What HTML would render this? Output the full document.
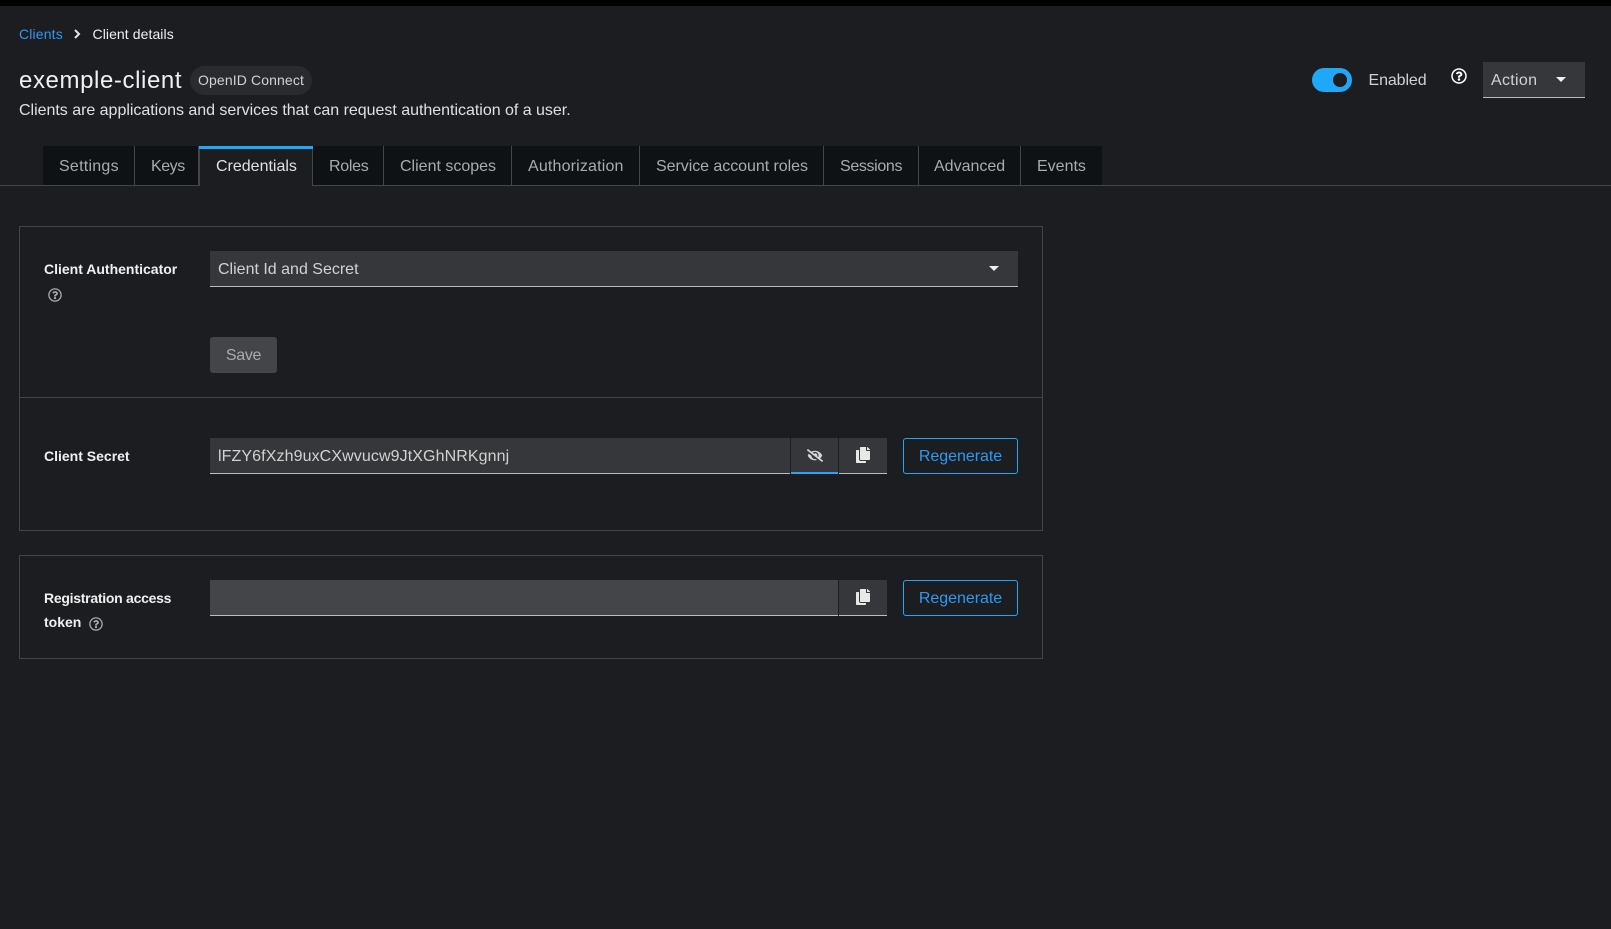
<!DOCTYPE html>
<html lang="en">
<head>
<meta charset="utf-8">
<title>Client details</title>
<style>
html,body{margin:0;padding:0;background:#1b1d21;}
body{position:relative;width:1611px;height:929px;overflow:hidden;font-family:"Liberation Sans",sans-serif;color:#e0e0e0;font-size:16px;}
.a{position:absolute;}
.t{position:absolute;white-space:nowrap;line-height:20px;}
.tab{position:absolute;top:146px;height:39px;background:#0f1214;border-right:1px solid #444548;box-sizing:border-box;}
.tl{position:absolute;top:157px;white-space:nowrap;line-height:20px;color:#aaabac;font-size:16px;}
.card{position:absolute;border:1px solid #444548;box-sizing:border-box;}
.field{position:absolute;background:#36373a;border-bottom:1px solid #bdbdbd;box-sizing:border-box;}
.regen{position:absolute;left:903px;width:115px;height:36px;border:1px solid #1fa7f8;border-radius:3px;box-sizing:border-box;color:#2b9af3;font-size:16px;line-height:35px;text-align:center;letter-spacing:-.03px;}
.b{font-weight:bold;font-size:14px;color:#f0f0f0;}
svg{position:absolute;display:block;}
</style>
</head>
<body>
<div class="a" style="left:0;top:0;width:1611px;height:6px;background:#000"></div>

<div class="t" style="left:19px;top:24px;font-size:14px;color:#2b9af3;letter-spacing:.15px;">Clients</div>
<svg style="left:73px;top:29px" width="8" height="10" viewBox="0 0 8 10"><path d="M2 1l4 4-4 4" fill="none" stroke="#e6e6e6" stroke-width="2"/></svg>
<div class="t" style="left:92.5px;top:24px;font-size:14px;color:#f0f0f0;letter-spacing:.08px;">Client details</div>

<div class="t" style="left:19px;top:70px;font-size:24px;line-height:22px;color:#f0f0f0;letter-spacing:.6px;">exemple-client</div>
<div class="a" style="left:190px;top:66px;width:122px;height:29px;border-radius:15px;background:#292b2f;"></div>
<div class="t" style="left:198px;top:70px;font-size:14px;color:#d2d2d2;letter-spacing:.12px;">OpenID Connect</div>
<div class="t" style="left:19px;top:101px;font-size:16px;color:#e0e0e0;letter-spacing:-.02px;">Clients are applications and services that can request authentication of a user.</div>

<div class="a" style="left:1312px;top:68px;width:40px;height:24px;border-radius:12px;background:#1fa7f8;"></div>
<div class="a" style="left:1333px;top:73px;width:14px;height:14px;border-radius:50%;background:#1b1d21;"></div>
<div class="t" style="left:1368.5px;top:71px;font-size:16px;color:#d2d2d2;letter-spacing:-.1px;">Enabled</div>
<svg style="left:1451px;top:68px" width="16" height="16" viewBox="0 0 512 512"><path fill="#fff" d="M256 8C119.043 8 8 119.083 8 256c0 136.997 111.043 248 248 248s248-111.003 248-248C504 119.083 392.957 8 256 8zm0 448c-110.532 0-200-89.431-200-200 0-110.495 89.472-200 200-200 110.491 0 200 89.471 200 200 0 110.53-89.431 200-200 200zm107.244-255.2c0 67.052-72.421 68.084-72.421 92.863V300c0 6.627-5.373 12-12 12h-45.647c-6.627 0-12-5.373-12-12v-8.659c0-35.745 27.1-50.034 47.579-61.516 17.561-9.845 28.324-16.541 28.324-29.579 0-17.246-21.999-28.693-39.784-28.693-23.189 0-33.894 10.977-48.942 29.969-4.057 5.12-11.46 6.071-16.666 2.124l-27.824-21.098c-5.107-3.872-6.251-11.066-2.644-16.363C184.846 131.491 214.94 112 261.794 112c49.071 0 101.45 38.304 101.45 88.8zM298 368c0 23.159-18.841 42-42 42s-42-18.841-42-42 18.841-42 42-42 42 18.841 42 42z"/></svg>
<div class="field" style="left:1483px;top:62px;width:102px;height:36px;"></div>
<div class="t" style="left:1491px;top:71px;font-size:16px;color:#d2d2d2;letter-spacing:.3px;">Action</div>
<svg style="left:1556px;top:77px" width="10" height="5" viewBox="0 0 10 5"><path d="M0 0h10L5 5z" fill="#f0f0f0"/></svg>

<!-- tabs -->
<div class="a" style="left:0;top:185px;width:1611px;height:1px;background:#444548;"></div>
<div class="tab" style="left:43px;width:92px;"></div>
<div class="tab" style="left:135px;width:64px;"></div>
<div class="a" style="left:199px;top:146px;width:114px;height:40px;background:#1b1d21;border-left:1px solid #444548;border-right:1px solid #444548;box-sizing:border-box;"></div>
<div class="a" style="left:199px;top:146px;width:114px;height:3px;background:#1fa7f8;"></div>
<div class="tab" style="left:313px;width:71px;"></div>
<div class="tab" style="left:384px;width:128px;"></div>
<div class="tab" style="left:512px;width:128px;"></div>
<div class="tab" style="left:640px;width:184px;"></div>
<div class="tab" style="left:824px;width:95px;"></div>
<div class="tab" style="left:919px;width:102px;"></div>
<div class="tab" style="left:1021px;width:81px;border-right:0;"></div>
<div class="tl" style="left:59px;letter-spacing:.25px;">Settings</div>
<div class="tl" style="left:151px;letter-spacing:-.45px;">Keys</div>
<div class="tl" style="left:216px;color:#e0e0e0;">Credentials</div>
<div class="tl" style="left:329px;letter-spacing:-.3px;">Roles</div>
<div class="tl" style="left:400px;">Client scopes</div>
<div class="tl" style="left:528px;letter-spacing:.17px;">Authorization</div>
<div class="tl" style="left:656px;letter-spacing:-.05px;">Service account roles</div>
<div class="tl" style="left:840px;letter-spacing:-.35px;">Sessions</div>
<div class="tl" style="left:934px;">Advanced</div>
<div class="tl" style="left:1037px;">Events</div>

<!-- card 1 -->
<div class="card" style="left:19px;top:226px;width:1024px;height:305px;"></div>
<div class="a" style="left:19px;top:397px;width:1024px;height:1px;background:#444548;"></div>
<div class="t b" style="left:44px;top:259px;">Client Authenticator</div>
<svg style="left:48px;top:288px" width="14" height="14" viewBox="0 0 512 512"><path fill="#aaabac" d="M256 8C119.043 8 8 119.083 8 256c0 136.997 111.043 248 248 248s248-111.003 248-248C504 119.083 392.957 8 256 8zm0 448c-110.532 0-200-89.431-200-200 0-110.495 89.472-200 200-200 110.491 0 200 89.471 200 200 0 110.53-89.431 200-200 200zm107.244-255.2c0 67.052-72.421 68.084-72.421 92.863V300c0 6.627-5.373 12-12 12h-45.647c-6.627 0-12-5.373-12-12v-8.659c0-35.745 27.1-50.034 47.579-61.516 17.561-9.845 28.324-16.541 28.324-29.579 0-17.246-21.999-28.693-39.784-28.693-23.189 0-33.894 10.977-48.942 29.969-4.057 5.12-11.46 6.071-16.666 2.124l-27.824-21.098c-5.107-3.872-6.251-11.066-2.644-16.363C184.846 131.491 214.94 112 261.794 112c49.071 0 101.45 38.304 101.45 88.8zM298 368c0 23.159-18.841 42-42 42s-42-18.841-42-42 18.841-42 42-42 42 18.841 42 42z"/></svg>
<div class="field" style="left:210px;top:251px;width:808px;height:36px;"></div>
<div class="t" style="left:218px;top:260px;font-size:16px;color:#d2d2d2;">Client Id and Secret</div>
<svg style="left:989px;top:266px" width="10" height="5" viewBox="0 0 10 5"><path d="M0 0h10L5 5z" fill="#f0f0f0"/></svg>
<div class="a" style="left:210px;top:337px;width:67px;height:36px;background:#444548;border-radius:3px;color:#aaabac;font-size:16px;line-height:38px;text-align:center;letter-spacing:-.3px;">Save</div>

<div class="t b" style="left:44px;top:446px;">Client Secret</div>
<div class="field" style="left:210px;top:438px;width:580px;height:36px;"></div>
<div class="t" style="left:218px;top:447px;font-size:16px;color:#d2d2d2;letter-spacing:.1px;">lFZY6fXzh9uxCXwvucw9JtXGhNRKgnnj</div>
<div class="a" style="left:791px;top:438px;width:47px;height:36px;background:#36373a;border-bottom:2px solid #1fa7f8;box-sizing:border-box;"></div>
<svg style="left:807px;top:449px" width="16" height="13" viewBox="0 0 640 512"><path fill="#d6d6d6" d="M320 400c-75.85 0-137.25-58.71-142.9-133.11L72.2 185.82c-13.79 17.3-26.48 35.59-36.72 55.59a32.35 32.35 0 0 0 0 29.19C89.71 376.41 197.07 448 320 448c26.91 0 52.87-4 77.89-10.46L346 397.39a144.13 144.13 0 0 1-26 2.61zm313.82 58.1l-110.55-85.44a331.25 331.25 0 0 0 81.25-102.07 32.35 32.35 0 0 0 0-29.19C550.29 135.59 442.93 64 320 64a308.15 308.15 0 0 0-147.32 37.7L45.46 3.37A16 16 0 0 0 23 6.18L3.37 31.45A16 16 0 0 0 6.18 53.9l588.36 454.73a16 16 0 0 0 22.46-2.81l19.64-25.27a16 16 0 0 0-2.82-22.45zm-183.72-142l-39.3-30.38A94.75 94.75 0 0 0 416 256a94.76 94.76 0 0 0-121.31-92.21A47.65 47.65 0 0 1 304 192a46.64 46.64 0 0 1-1.54 10l-73.61-56.89A142.31 142.31 0 0 1 320 112a143.92 143.92 0 0 1 144 144c0 21.63-5.29 41.79-13.9 60.11z"/></svg>
<div class="field" style="left:839px;top:438px;width:48px;height:36px;"></div>
<svg style="left:856px;top:447px" width="14" height="16" viewBox="0 0 448 512"><path fill="#e8e8e8" d="M320 448v40c0 13.255-10.745 24-24 24H24c-13.255 0-24-10.745-24-24V120c0-13.255 10.745-24 24-24h72v296c0 30.879 25.121 56 56 56h168zm0-344V0H152c-13.255 0-24 10.745-24 24v368c0 13.255 10.745 24 24 24h272c13.255 0 24-10.745 24-24V128H344c-13.2 0-24-10.8-24-24zm120.971-31.029L375.029 7.029A24 24 0 0 0 358.059 0H352v96h96v-6.059a24 24 0 0 0-7.029-16.97z"/></svg>
<div class="regen" style="top:438px;">Regenerate</div>

<!-- card 2 -->
<div class="card" style="left:19px;top:555px;width:1024px;height:104px;"></div>
<div class="t b" style="left:44px;top:588px;letter-spacing:-.27px;">Registration access</div>
<div class="t b" style="left:44px;top:612px;">token</div>
<svg style="left:89px;top:617px" width="14" height="14" viewBox="0 0 512 512"><path fill="#aaabac" d="M256 8C119.043 8 8 119.083 8 256c0 136.997 111.043 248 248 248s248-111.003 248-248C504 119.083 392.957 8 256 8zm0 448c-110.532 0-200-89.431-200-200 0-110.495 89.472-200 200-200 110.491 0 200 89.471 200 200 0 110.53-89.431 200-200 200zm107.244-255.2c0 67.052-72.421 68.084-72.421 92.863V300c0 6.627-5.373 12-12 12h-45.647c-6.627 0-12-5.373-12-12v-8.659c0-35.745 27.1-50.034 47.579-61.516 17.561-9.845 28.324-16.541 28.324-29.579 0-17.246-21.999-28.693-39.784-28.693-23.189 0-33.894 10.977-48.942 29.969-4.057 5.12-11.46 6.071-16.666 2.124l-27.824-21.098c-5.107-3.872-6.251-11.066-2.644-16.363C184.846 131.491 214.94 112 261.794 112c49.071 0 101.45 38.304 101.45 88.8zM298 368c0 23.159-18.841 42-42 42s-42-18.841-42-42 18.841-42 42-42 42 18.841 42 42z"/></svg>
<div class="field" style="left:210px;top:580px;width:628px;height:36px;background:#444548;"></div>
<div class="field" style="left:839px;top:580px;width:48px;height:36px;"></div>
<svg style="left:856px;top:589px" width="14" height="16" viewBox="0 0 448 512"><path fill="#e8e8e8" d="M320 448v40c0 13.255-10.745 24-24 24H24c-13.255 0-24-10.745-24-24V120c0-13.255 10.745-24 24-24h72v296c0 30.879 25.121 56 56 56h168zm0-344V0H152c-13.255 0-24 10.745-24 24v368c0 13.255 10.745 24 24 24h272c13.255 0 24-10.745 24-24V128H344c-13.2 0-24-10.8-24-24zm120.971-31.029L375.029 7.029A24 24 0 0 0 358.059 0H352v96h96v-6.059a24 24 0 0 0-7.029-16.97z"/></svg>
<div class="regen" style="top:580px;">Regenerate</div>
</body>
</html>
